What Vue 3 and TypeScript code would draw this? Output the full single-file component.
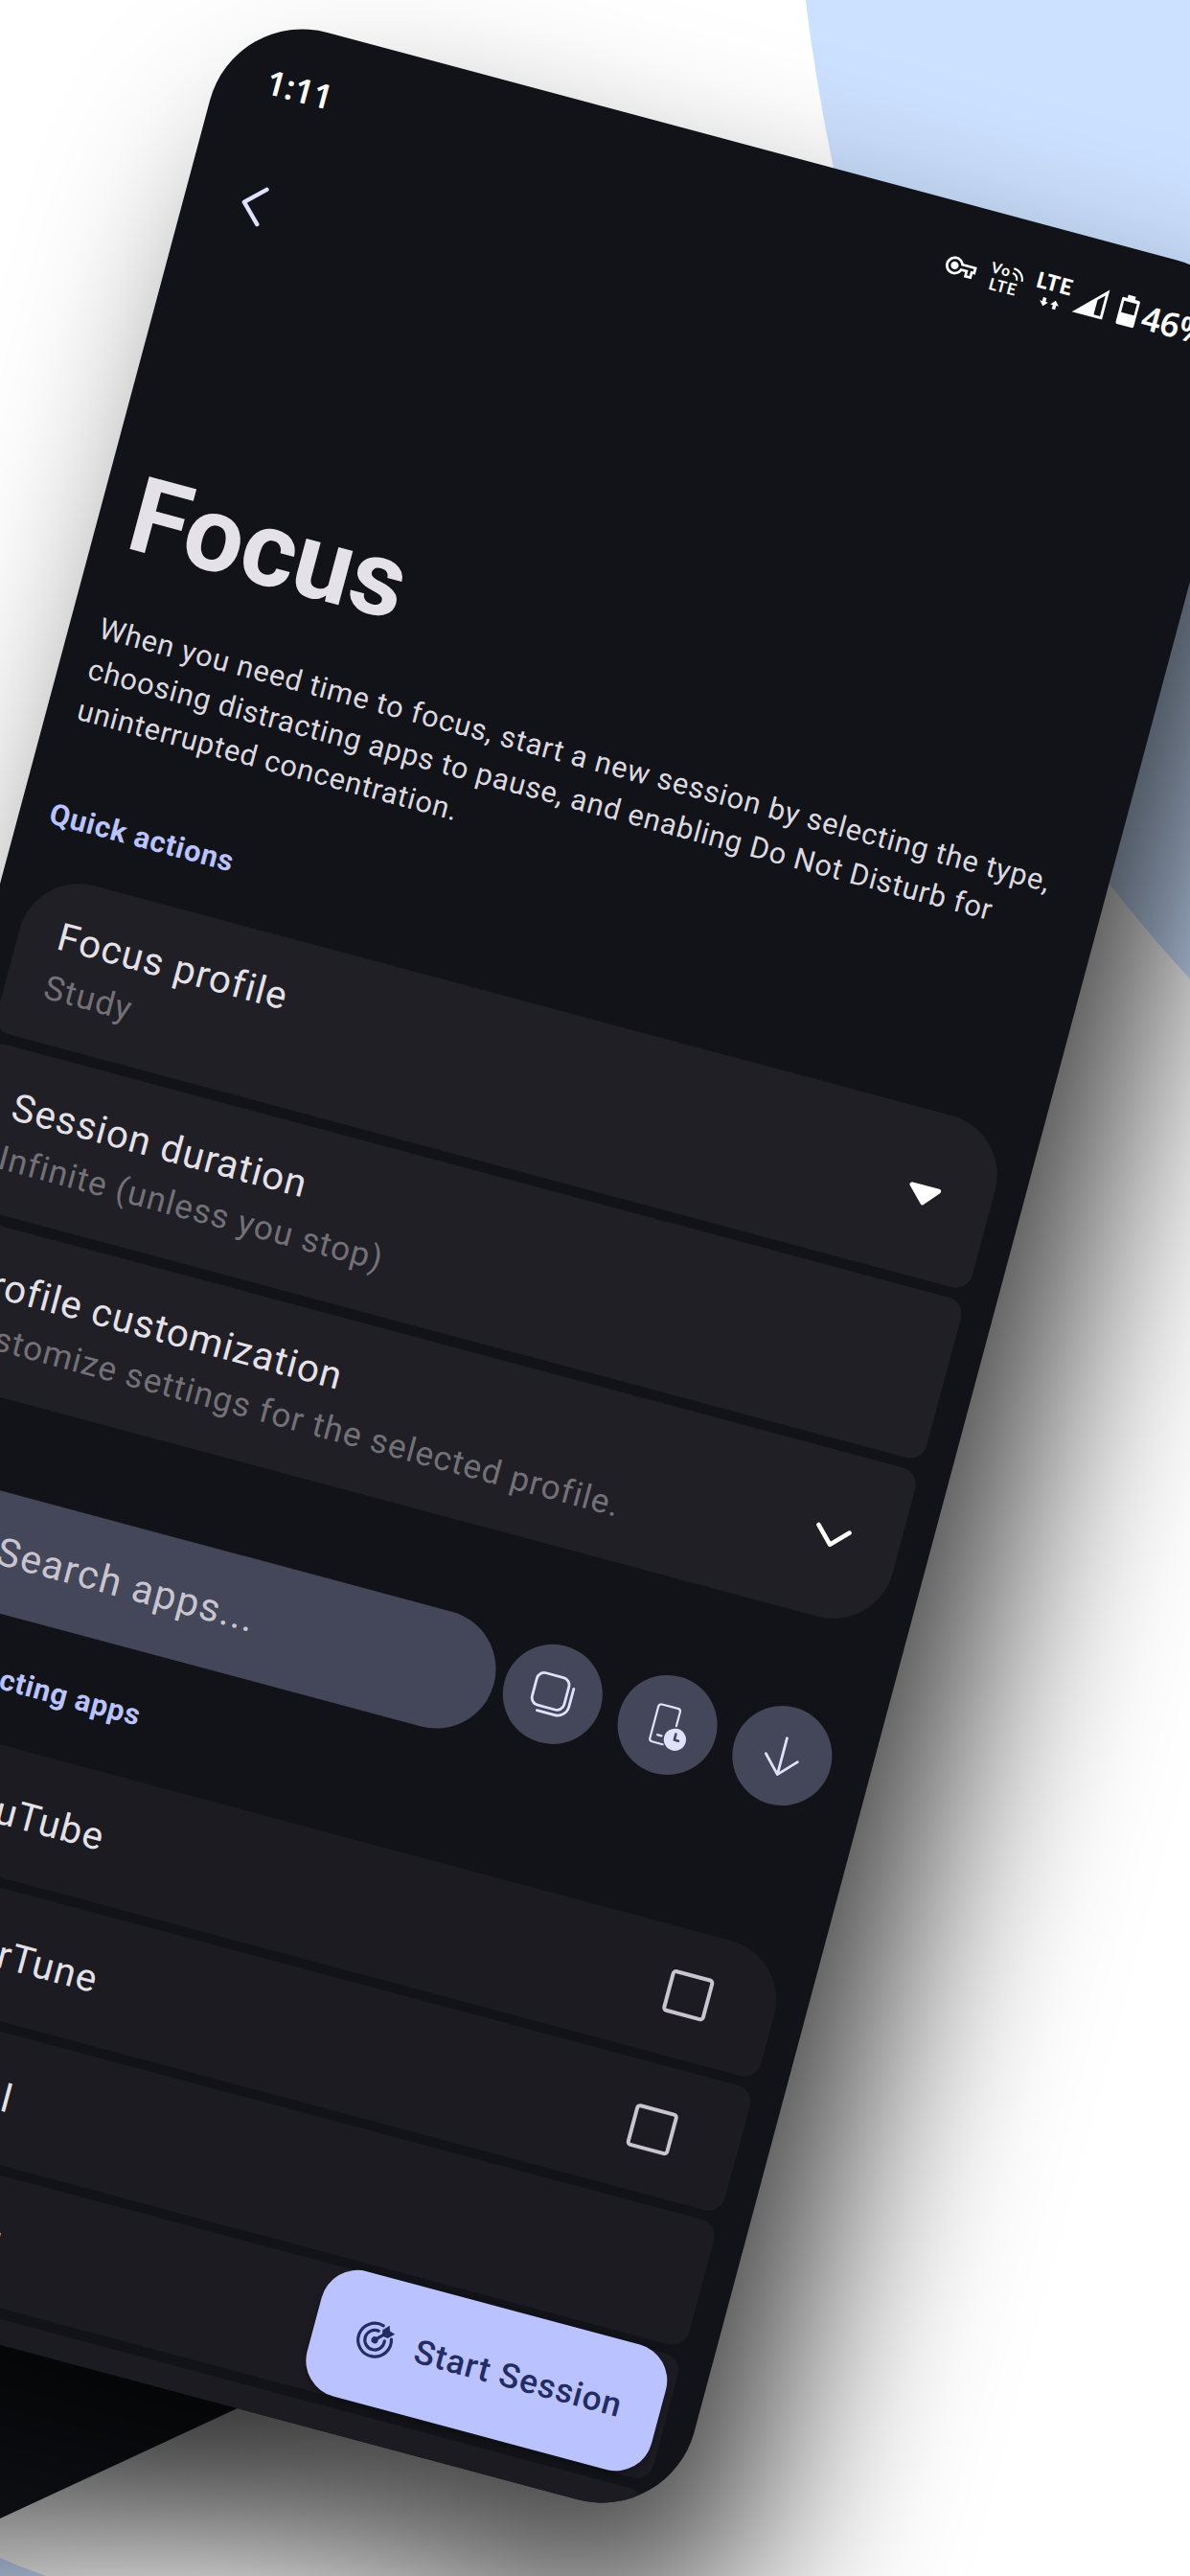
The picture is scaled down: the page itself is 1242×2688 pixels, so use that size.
<script setup lang="ts">
import { ref } from 'vue'

interface Action {
  title: string
  summary: string
  trailing: 'dropdown' | 'chevron' | null
}

interface AppRow {
  name: string
  checkbox: boolean
}

const actions = ref<Action[]>([
  { title: 'Focus profile', summary: 'Study', trailing: 'dropdown' },
  { title: 'Session duration', summary: 'Infinite (unless you stop)', trailing: null },
  { title: 'Profile customization', summary: 'Customize settings for the selected profile.', trailing: 'chevron' },
])

const apps = ref<AppRow[]>([
  { name: 'YouTube', checkbox: true },
  { name: 'OuterTune', checkbox: true },
  { name: 'Journal', checkbox: false },
  { name: 'Calendar', checkbox: false },
  { name: '', checkbox: false },
])
</script>

<template>
  <main class="stage">
    <svg class="backdrop" viewBox="0 0 1242 2688" aria-hidden="true">
      <defs>
        <filter id="soft" filterUnits="userSpaceOnUse" x="-900" y="-500" width="3000" height="3900" color-interpolation-filters="sRGB">
          <feGaussianBlur stdDeviation="100" />
        </filter>
      </defs>
      <path d="M840.7 0Q852 90 870 175.7C925 470 1020 745 1157.7 922.3Q1198 974 1242 1021.4V0Z" fill="#cce1ff" />
      <path d="M0 2669Q24 2680 48.3 2688H0Z" fill="#cce1ff" />
      <g filter="url(#soft)">
        <path d="M-800 3080L0 2708L350 2545L100 1900H-800Z" fill="#000" fill-opacity="0.4" />
      </g>
      <path d="M0 2380L300 2440V2490L246.7 2513.6L0 2628Z" fill="#111318" />
      <g filter="url(#soft)">
        <rect width="1117.8" height="2418.7" rx="100" transform="translate(245 8.3) rotate(15) translate(79 115)" fill="#000" fill-opacity="0.75" />
      </g>
    </svg>

    <section class="phone">
      <header class="status">
        <span class="clock">1:11</span>
        <svg class="key" viewBox="0 0 24 24" fill="#fff"><path d="M22 19h-6v-4h-2.68c-1.14 2.42-3.6 4-6.32 4-3.86 0-7-3.14-7-7s3.14-7 7-7c2.72 0 5.17 1.58 6.32 4H24v6h-2v4zm-4-2h2v-4h2v-2H11.94l-.23-.67C11.01 8.34 9.11 7 7 7c-2.76 0-5 2.24-5 5s2.24 5 5 5c2.11 0 4.01-1.34 4.71-3.33l.23-.67H18v4zM7 15c-1.65 0-3-1.35-3-3s1.35-3 3-3 3 1.35 3 3-1.35 3-3 3z" /></svg>
        <svg class="volte" viewBox="0 0 37 33">
          <text x="0" y="13.2" font-size="15.5" textLength="20">Vo</text>
          <text x="2" y="31" font-size="17" textLength="29">LTE</text>
          <g fill="none" stroke="#fff" stroke-width="2">
            <path d="M23 8.4a7 7 0 0 1 6 6.400" />
            <path d="M23 3.500a11.500 11.500 0 0 1 11.600 11" />
          </g>
        </svg>
        <svg class="lte" viewBox="0 0 37 36">
          <text class="heavy" x="-1" y="16.800" font-size="22.800" textLength="38">LTE</text>
          <path d="M10.300 25.300h3.600v4.200h2.700l-4.500 5-4.500-5h2.700zM22 34.800h3.600v-4.200h2.700l-4.500-5-4.500 5h2.700z" fill="#fff" />
        </svg>
        <svg class="signal" viewBox="0 0 33 33">
          <path fill-rule="evenodd" d="M0 32.200L32.500 0V32.200ZM22.800 13.500V29.400H29.600V7Z" fill="#fff" />
        </svg>
        <svg class="battery" viewBox="0 0 20 33">
          <path fill-rule="evenodd" d="M5.500 0H13.700V3.400H17.600Q19.400 3.400 19.400 5.200V30.600Q19.400 32.400 17.600 32.400H1.800Q0 32.400 0 30.600V5.200Q0 3.400 1.800 3.400H5.500ZM2.800 7V19.400H16.600V7Z" fill="#fff" />
        </svg>
        <span class="percent">46%</span>
      </header>

      <nav class="topbar">
        <svg class="back" viewBox="0 0 26 44"><path d="M22.400 3.700L3 22.400L22 41.300" /></svg>
      </nav>

      <h1>Focus</h1>
      <p class="intro">
        When you need time to focus, start a new session by selecting the type,<br />
        choosing distracting apps to pause, and enabling Do Not Disturb for<br />
        uninterrupted concentration.
      </p>

      <h2 class="quick">Quick actions</h2>
      <ul class="cards">
        <li v-for="a in actions" :key="a.title" class="card action">
          <div class="copy">
            <div class="title">{{ a.title }}</div>
            <div class="summary">{{ a.summary }}</div>
          </div>
          <svg v-if="a.trailing === 'dropdown'" class="trail" viewBox="-22 -22 44 44">
            <path d="M-14.300 -7H14.300L1 8.500Z" fill="#fff" stroke="#fff" stroke-width="5" stroke-linejoin="round" />
          </svg>
          <svg v-else-if="a.trailing === 'chevron'" class="trail" viewBox="-22 -22 44 44">
            <path d="M-16.700 -6.700L0 10.300L16.700 -6.700" fill="none" stroke="#fff" stroke-width="4.600" stroke-linecap="round" stroke-linejoin="round" />
          </svg>
        </li>
      </ul>

      <div class="search-row">
        <div class="search">Search apps...</div>
        <div class="slot">
          <button class="round">
            <svg viewBox="-26 -26 52 52" class="line">
              <rect x="-20.200" y="-19.600" width="34.600" height="34.600" rx="8" />
              <path d="M19.800 -11V8.300A12.200 12.200 0 0 1 7.600 20.500H-11.500" />
            </svg>
          </button>
        </div>
        <div class="slot">
          <button class="round">
            <svg viewBox="-26 -26 52 52" class="line thin">
              <path d="M9.300 -1.300V-16.200Q9.300 -19.300 6.200 -19.300H-11Q-14.100 -19.300 -14.100 -16.200V17.800Q-14.100 20.900 -11 20.900H.4M-7.500 12.600H-3" />
              <circle cx="11.500" cy="12.800" r="11.600" class="solid" />
              <path d="M11 6.900V13.200H15.300" class="hands" />
            </svg>
          </button>
        </div>
        <div class="slot">
          <button class="round">
            <svg viewBox="-26 -26 52 52" class="line"><path d="M.2 -19V20.200M-17 2.200L.2 20.200L17.200 2.200" /></svg>
          </button>
        </div>
      </div>

      <h2 class="select">Select distracting apps</h2>
      <ul class="cards">
        <li v-for="(app, i) in apps" :key="i" class="card app">
          <span class="title">{{ app.name }}</span>
          <span v-if="app.checkbox" class="check"></span>
        </li>
      </ul>

      <button class="start">
        <svg viewBox="-22 -22 44 44">
          <g fill="none" stroke="#242c61" stroke-width="3.200" stroke-linecap="round">
            <path d="M16.600 -5.200A17.400 17.400 0 1 1 5 -16.700" />
            <path d="M10.200 -1.500A10.300 10.300 0 1 1 1.500 -10.200" />
            <path d="M0 0L9 -9" />
          </g>
          <circle r="3.600" fill="#242c61" />
          <path d="M6 -7.600L5.300 -12.300L11.200 -18.600L13 -13L18.900 -11.200L12.600 -5.300L7.600 -6Z" fill="#242c61" />
        </svg>
        Start Session
      </button>
    </section>
  </main>
</template>

<style>
html,
body {
  margin: 0;
  background: #fff;
}
</style>

<style scoped>
.stage {
  position: relative;
  width: 1242px;
  height: 2688px;
  overflow: hidden;
  background: #fff;
  font-family: Roboto, "Noto Sans", sans-serif;
}
.backdrop {
  position: absolute;
  inset: 0;
  width: 1242px;
  height: 2688px;
}
/* The handset is tilted and bleeds off the canvas */
.phone {
  position: absolute;
  left: 245px;
  top: 8.3px;
  width: 1117.8px;
  height: 2418.7px;
  box-sizing: border-box;
  padding: 43px 31.5px 0;
  border-radius: 100px;
  overflow: hidden;
  background: #111318;
  color: #e4e1e9;
  transform-origin: 0 0;
  transform: rotate(15deg);
}
svg {
  display: block;
  flex: none;
  overflow: visible;
}
.status {
  display: flex;
  height: 44px;
  align-items: flex-start;
  font-family: "Noto Sans", "Open Sans", sans-serif;
  font-size: 35.2px;
  line-height: 44px;
  font-weight: 600;
  color: #fff;
}
.status text {
  fill: #fff;
  font-family: Lato, "Noto Sans", sans-serif;
  font-weight: 700;
}
.status .heavy {
  font-weight: 900;
}
.clock {
  width: 725.5px;
  padding-left: 21px;
  box-sizing: border-box;
  line-height: 42px;
}
.key {
  width: 32.5px;
  height: 32.5px;
  margin: 6px 0 0 28.5px;
}
.volte {
  width: 37px;
  height: 33px;
  margin: 6px 0 0 15px;
}
.lte {
  width: 37px;
  height: 36px;
  margin: 5px 0 0 12.6px;
}
.signal {
  width: 33px;
  height: 33px;
  margin: 5px 0 0 6.9px;
}
.battery {
  width: 20px;
  height: 33px;
  margin: 5px 0 0 13.9px;
}
.percent {
  margin-left: 5px;
}
.topbar {
  height: 384.600px;
  box-sizing: border-box;
  padding: 84px 0 0 27px;
}
.back {
  width: 26px;
  height: 44px;
  fill: none;
  stroke: #e0e0ff;
  stroke-width: 4.4px;
  stroke-linecap: round;
  stroke-linejoin: round;
}
h1 {
  margin: 0;
  padding-left: 2px;
  font-size: 110px;
  line-height: 130px;
  font-weight: 700;
  letter-spacing: -0.7px;
}
.intro {
  margin: 38.600px 0 0;
  font-size: 30.800px;
  line-height: 44px;
  letter-spacing: 0.78px;
  white-space: nowrap;
  color: #dcd9e1;
}
h2 {
  margin: 0;
  font-size: 30.800px;
  line-height: 44px;
  font-weight: 700;
  letter-spacing: 0.75px;
  color: #bac3ff;
}
.quick {
  margin: 67.900px 0 38.700px;
}
.select {
  margin: 44.800px 0 43.200px;
}
.cards {
  list-style: none;
  margin: 0;
  padding: 0;
  display: flex;
  flex-direction: column;
  gap: 10.500px;
}
.card {
  display: flex;
  box-sizing: border-box;
  align-items: center;
  justify-content: space-between;
  border-radius: 18px;
}
.card:first-child {
  border-top-left-radius: 64px;
  border-top-right-radius: 64px;
}
.action {
  height: 173.500px;
  padding: 4px 49px 0 41.500px;
  background: #201f25;
}
.action:last-child {
  border-bottom-left-radius: 64px;
  border-bottom-right-radius: 64px;
}
.title {
  font-size: 40.300px;
  line-height: 54px;
  letter-spacing: 1.1px;
}
.summary {
  font-size: 35.200px;
  line-height: 55px;
  letter-spacing: 1.1px;
  color: #727177;
}
.trail {
  width: 44px;
  height: 44px;
  margin-top: -4px;
}
.search-row {
  display: flex;
  height: 123.800px;
  margin-top: 93.600px;
}
.search {
  flex: 1;
  box-sizing: border-box;
  padding-left: 146px;
  border-radius: 62px;
  background: #444659;
  color: #c8c5d0;
  font-size: 41px;
  line-height: 122px;
  letter-spacing: 1.45px;
}
.slot {
  width: 124px;
  display: flex;
  justify-content: center;
}
button {
  border: 0;
  padding: 0;
  font: inherit;
}
.round {
  width: 103.700px;
  height: 103.700px;
  margin-top: 4px;
  border-radius: 50%;
  background: #444659;
  display: flex;
  align-items: center;
  justify-content: center;
}
.round svg {
  width: 52px;
  height: 52px;
}
.line {
  fill: none;
  stroke: #e0e0ff;
  stroke-width: 2.8px;
  stroke-linecap: round;
  stroke-linejoin: round;
}
.thin {
  stroke-width: 2.2px;
}
.solid {
  fill: #e0e0ff;
  stroke: none;
}
.hands {
  stroke: #444659;
  stroke-width: 2.6px;
}
.app {
  height: 134.300px;
  padding: 0 69px 0 166.500px;
  background: #1b1b21;
}
.check {
  width: 46px;
  height: 46px;
  box-sizing: border-box;
  border: 4.800px solid #c8c5d0;
  border-radius: 5px;
}
/* Floating action over the list */
.start {
  position: absolute;
  left: 705.600px;
  top: 2245.800px;
  width: 372px;
  height: 135.300px;
  box-sizing: border-box;
  padding-left: 43px;
  display: flex;
  align-items: center;
  gap: 22px;
  border-radius: 38.500px;
  background: #bac3ff;
  color: #242c61;
  font-size: 35.200px;
  font-weight: 500;
  letter-spacing: 0.95px;
  white-space: nowrap;
  box-shadow: 0 3px 6px rgba(0, 0, 0, 0.3);
}
.start svg {
  width: 44px;
  height: 44px;
}
</style>
